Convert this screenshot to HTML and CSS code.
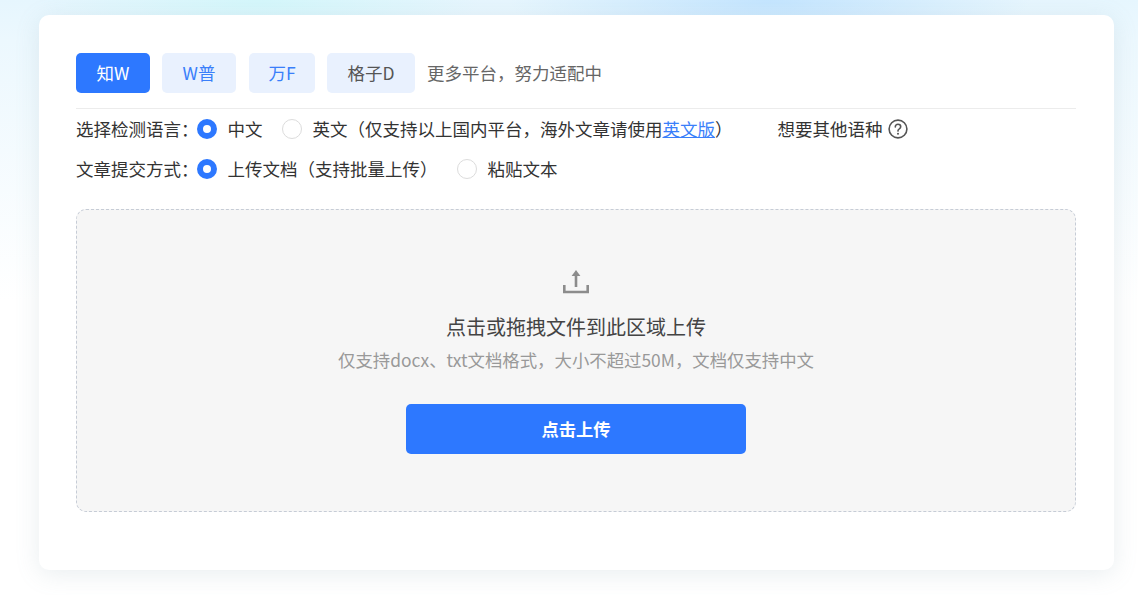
FILE: index.html
```html
<!DOCTYPE html>
<html lang="zh-CN">
<head>
<meta charset="utf-8">
<title>上传文档</title>
<link rel="stylesheet" href="styles.css">
</head>
<body>
<main class="card">
  <div class="tabs">
    <button class="tab tab-active tab-w74">知W</button>
    <button class="tab tab-blue tab-w74">W普</button>
    <button class="tab tab-blue tab-w66">万F</button>
    <button class="tab tab-grey tab-w88">格子D</button>
    <span class="tabs-note">更多平台，努力适配中</span>
  </div>
  <div class="option-row">
    <span class="option-label">选择检测语言：</span>
    <span class="radio radio-on"></span>
    <span class="radio-text radio-text-1">中文</span>
    <span class="radio"></span>
    <span class="radio-text">英文（仅支持以上国内平台，海外文章请使用<a class="link" href="#">英文版</a>）</span>
    <span class="other-lang">想要其他语种</span>
    <svg class="help" width="20" height="20" viewBox="0 0 20 20" fill="none">
      <circle cx="10" cy="10" r="8.9" stroke="#555" stroke-width="1.6"/>
      <path d="M7.3 8c0-1.6 1.1-2.7 2.7-2.7s2.7 1 2.7 2.4c0 1.1-.7 1.7-1.4 2.2-.8.5-1.3.9-1.3 1.9v.3" stroke="#555" stroke-width="1.6" stroke-linecap="round"/>
      <circle cx="10" cy="14.7" r="1" fill="#555"/>
    </svg>
  </div>
  <div class="option-row">
    <span class="option-label">文章提交方式：</span>
    <span class="radio radio-on"></span>
    <span class="radio-text radio-text-2">上传文档（支持批量上传）</span>
    <span class="radio"></span>
    <span class="radio-text">粘贴文本</span>
  </div>
  <section class="dropzone">
    <svg class="upload-icon" width="28" height="26" viewBox="0 0 28 26" fill="none">
      <path d="M2.3 16V23H25.7V16" stroke="#8c8c8c" stroke-width="2.6"/>
      <path d="M14 18V5" stroke="#8c8c8c" stroke-width="2.6"/>
      <path d="M14 1L18.4 7H9.6Z" fill="#8c8c8c"/>
    </svg>
    <h2 class="drop-title">点击或拖拽文件到此区域上传</h2>
    <p class="drop-hint">仅支持docx、txt文档格式，大小不超过50M，文档仅支持中文</p>
    <button class="upload-btn">点击上传</button>
  </section>
</main>
</body>
</html>
```
FILE: styles.css
```css
* { box-sizing: border-box; }
html, body { margin: 0; height: 100%; }
body {
  width: 1138px;
  height: 595px;
  overflow: hidden;
  padding: 15px 24px 25px 39px;
  font-family: "Noto Sans CJK SC", "Noto Sans", sans-serif;
  background:
    radial-gradient(ellipse 260px 60px at 770px 0, #c4e5ff 0%, rgba(196,229,255,0) 100%),
    radial-gradient(ellipse 220px 50px at 260px 0, #d4f7fb 0%, rgba(212,247,251,0) 100%),
    linear-gradient(180deg, #e6f6fe 0, #ecf8fe 40px, #ffffff 300px),
    #fff;
}
.card {
  width: 1075px;
  height: 555px;
  padding: 38px 38px 0 37px;
  background: #fff;
  border-radius: 10px;
  box-shadow: 0 4px 24px rgba(120, 150, 160, 0.16);
}
.tabs {
  display: flex;
  align-items: center;
  gap: 12px;
  height: 56px;
  padding-bottom: 15px;
  border-bottom: 1px solid #ececec;
}
.tab {
  height: 40px;
  padding: 0 0 2px;
  border: 0;
  border-radius: 5px;
  font: inherit;
  font-size: 17.5px;
  background: #e9f1fe;
}
.tab-w74 { width: 74px; }
.tab-w66 { width: 66px; margin-left: 1px; }
.tab-w88 { width: 88px; }
.tab-active { background: #2d78ff; color: #fff; }
.tab-blue { color: #3a7ffa; }
.tab-grey { color: #555; }
.tabs-note { color: #666; font-size: 17.5px; margin-bottom: 2px; }
.option-row {
  display: flex;
  align-items: center;
  height: 40px;
  font-size: 17.5px;
  color: #333;
}
.option-label { width: 121px; white-space: nowrap; margin-bottom: 2px; }
.radio {
  width: 20px;
  height: 20px;
  border: 1px solid #dcdcdc;
  border-radius: 50%;
  background: #fff;
  margin-right: 10.5px;
  flex: none;
}
.radio-on { border: 6px solid #2d78ff; }
.radio-text { white-space: nowrap; margin-bottom: 2px; }
.radio-text-1 { margin-right: 19.5px; }
.radio-text-2 { margin-right: 19.5px; }
.link { color: #3a7ffa; text-decoration: underline; }
.other-lang { margin-left: 45px; margin-bottom: 2px; }
.help { margin-left: 5.5px; flex: none; }
.dropzone {
  display: flex;
  flex-direction: column;
  align-items: center;
  width: 1000px;
  height: 303px;
  margin-top: 20px;
  padding-top: 59px;
  background: #f6f6f6;
  border: 1px dashed #c6ccd6;
  border-radius: 10px;
}
.upload-icon { display: block; }
.drop-title {
  margin: 19px 0 0;
  font-size: 20px;
  font-weight: 400;
  line-height: 26px;
  color: #444;
}
.drop-hint {
  margin: 8px 0 0;
  font-size: 17.4px;
  line-height: 24px;
  color: #999;
}
.upload-btn {
  width: 340px;
  height: 50px;
  margin-top: 32px;
  padding: 0 0 2px;
  border: 0;
  border-radius: 5px;
  background: #2d78ff;
  color: #fff;
  font: inherit;
  font-size: 17.3px;
  font-weight: 700;
}
```
